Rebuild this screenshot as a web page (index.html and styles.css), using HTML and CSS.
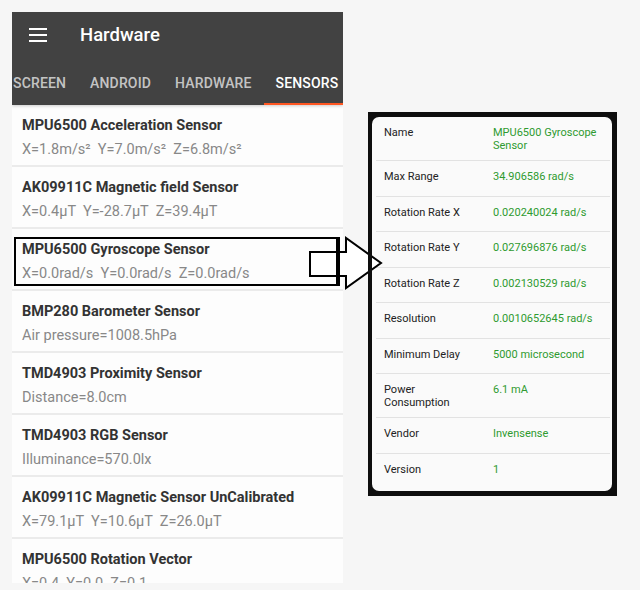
FILE: index.html
```html
<!DOCTYPE html>
<html lang="en">
<head>
<meta charset="utf-8">
<title>Hardware - Sensors</title>
<link rel="stylesheet" href="styles.css">
</head>
<body>
<div class="canvas">
  <div class="phone">
    <header class="appbar">
      <div class="toolbar">
        <svg class="menu" viewBox="0 0 18 14" width="18" height="14" aria-hidden="true">
          <rect x="0" y="0" width="18" height="2" fill="#fff"/>
          <rect x="0" y="6" width="18" height="2" fill="#fff"/>
          <rect x="0" y="12" width="18" height="2" fill="#fff"/>
        </svg>
        <h1 class="title">Hardware</h1>
      </div>
      <nav class="tabs">
        <div class="tab-strip">
          <span class="tab">Screen</span>
          <span class="tab">Android</span>
          <span class="tab">Hardware</span>
          <span class="tab active">Sensors</span>
        </div>
      </nav>
    </header>
    <ul class="sensor-list">
      <li class="sensor"><div class="name">MPU6500 Acceleration Sensor</div><div class="reading">X=1.8m/s²  Y=7.0m/s²  Z=6.8m/s²</div></li>
      <li class="sensor"><div class="name">AK09911C Magnetic field Sensor</div><div class="reading">X=0.4μT  Y=-28.7μT  Z=39.4μT</div></li>
      <li class="sensor"><div class="name">MPU6500 Gyroscope Sensor</div><div class="reading">X=0.0rad/s  Y=0.0rad/s  Z=0.0rad/s</div></li>
      <li class="sensor"><div class="name">BMP280 Barometer Sensor</div><div class="reading">Air pressure=1008.5hPa</div></li>
      <li class="sensor"><div class="name">TMD4903 Proximity Sensor</div><div class="reading">Distance=8.0cm</div></li>
      <li class="sensor"><div class="name">TMD4903 RGB Sensor</div><div class="reading">Illuminance=570.0lx</div></li>
      <li class="sensor"><div class="name">AK09911C Magnetic Sensor UnCalibrated</div><div class="reading">X=79.1μT  Y=10.6μT  Z=26.0μT</div></li>
      <li class="sensor"><div class="name">MPU6500 Rotation Vector</div><div class="reading">X=0.4  Y=0.0  Z=0.1</div></li>
    </ul>
  </div>

  <section class="details">
    <div class="card">
      <div class="row"><div class="label">Name</div><div class="value">MPU6500 Gyroscope Sensor</div></div>
      <div class="row"><div class="label">Max Range</div><div class="value">34.906586 rad/s</div></div>
      <div class="row"><div class="label">Rotation Rate X</div><div class="value">0.020240024 rad/s</div></div>
      <div class="row"><div class="label">Rotation Rate Y</div><div class="value">0.027696876 rad/s</div></div>
      <div class="row"><div class="label">Rotation Rate Z</div><div class="value">0.002130529 rad/s</div></div>
      <div class="row"><div class="label">Resolution</div><div class="value">0.0010652645 rad/s</div></div>
      <div class="row"><div class="label">Minimum Delay</div><div class="value">5000 microsecond</div></div>
      <div class="row"><div class="label">Power Consumption</div><div class="value">6.1 mA</div></div>
      <div class="row"><div class="label">Vendor</div><div class="value">Invensense</div></div>
      <div class="row"><div class="label">Version</div><div class="value">1</div></div>
    </div>
  </section>

  <svg class="arrow" viewBox="0 0 76 54" width="76" height="54" aria-hidden="true">
    <polygon points="2,16 38,16 38,2 73,27 38,52 38,40 2,40" fill="#fff" stroke="#000" stroke-width="2" stroke-linejoin="miter"/>
    <rect x="60" y="0" width="4" height="54" fill="#0e0e0e"/>
  </svg>
  <div class="highlight"></div>
</div>
</body>
</html>
```

FILE: styles.css
```css
html, body {
  margin: 0;
  padding: 0;
}

body {
  background: #f6f6f6;
  font-family: Roboto, "Noto Sans", "Liberation Sans", sans-serif;
}

.canvas {
  position: relative;
  width: 640px;
  height: 590px;
  display: flex;
  align-items: flex-start;
  overflow: hidden;
}

/* ---------- phone screenshot ---------- */
.phone {
  flex: none;
  margin: 12px 0 0 12px;
  width: 331px;
  height: 571px;
  overflow: hidden;
  background: #fdfdfd;
  display: flex;
  flex-direction: column;
}

.appbar {
  background: #424242;
  box-shadow: 0 1px 3px rgba(0, 0, 0, 0.2);
  position: relative;
  z-index: 1;
  flex: none;
}

.toolbar {
  height: 46px;
  display: flex;
  align-items: center;
  padding-left: 17px;
}

.menu {
  flex: none;
  margin-right: 33px;
}

.title {
  margin: 0;
  font-size: 18.5px;
  font-weight: 500;
  color: #fff;
}

.tabs {
  height: 47px;
  overflow: hidden;
}

.tab-strip {
  display: flex;
  height: 100%;
  margin-left: -11px;
}

.tab {
  flex: none;
  display: flex;
  align-items: center;
  box-sizing: border-box;
  padding: 2px 12px 0;
  font-size: 14px;
  font-weight: 500;
  letter-spacing: 0.15px;
  text-transform: uppercase;
  white-space: nowrap;
  color: rgba(255, 255, 255, 0.7);
}

.tab.active {
  color: #fff;
  box-shadow: inset 0 -2px 0 #ff5722;
}

.sensor-list {
  list-style: none;
  margin: 0;
  padding: 0;
}

.sensor {
  padding: 11px 10px 5px;
  border-bottom: 2px solid #ebebeb;
  background: #fdfdfd;
}

.name {
  font-size: 14.5px;
  font-weight: 700;
  line-height: 20px;
  color: #333;
  white-space: nowrap;
}

.reading {
  margin-top: 4px;
  font-size: 14.5px;
  line-height: 20px;
  color: #888;
  white-space: pre;
}

/* ---------- detail panel ---------- */
.details {
  flex: none;
  margin: 112px 0 0 25px;
  width: 249px;
  height: 384px;
  box-sizing: border-box;
  padding: 5px 5px 5px 4px;
  background: #0e0e0e;
}

.card {
  height: 100%;
  box-sizing: border-box;
  padding: 0 2px 0 4px;
  background: #fafafa;
  border-radius: 7px;
}

.row {
  display: flex;
  box-sizing: border-box;
  min-height: 35.5px;
  padding: 9px 0 8px 8px;
  border-bottom: 1px solid #e2e2e2;
  font-size: 11px;
  line-height: 13px;
}

.row:last-child {
  border-bottom: none;
}

.label {
  flex: none;
  width: 88px;
  margin-right: 21px;
  color: #222;
}

.value {
  flex: 1;
  padding-right: 8px;
  color: #2f9a30;
}

/* ---------- annotations ---------- */
.arrow {
  position: absolute;
  left: 308px;
  top: 236px;
}

.highlight {
  position: absolute;
  left: 14px;
  top: 237px;
  width: 320px;
  height: 45px;
  border: 2px solid #000;
  border-right-width: 4px;
}
```
